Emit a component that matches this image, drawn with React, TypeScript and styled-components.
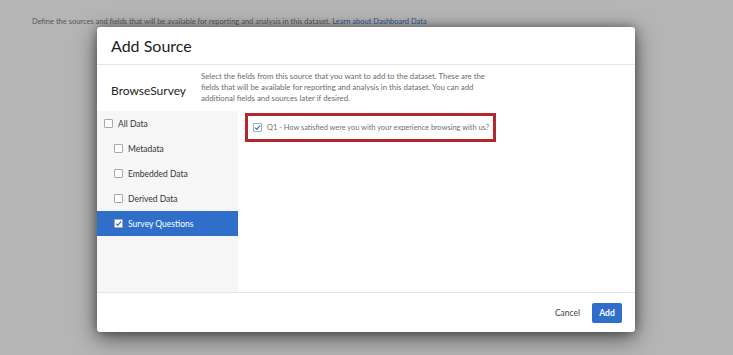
import React from "react";
import styled, { createGlobalStyle } from "styled-components";

const Global = createGlobalStyle`
  html, body { margin: 0; padding: 0; }
  body {
    background: #b5b5b5;
    font-family: Lato, "Open Sans", "Liberation Sans", sans-serif;
    width: 733px;
    height: 355px;
    overflow: hidden;
  }
`;

const Page = styled.div`
  position: relative;
  width: 733px;
  height: 355px;
`;

const Intro = styled.p`
  margin: 0;
  padding: 16px 0 0 32px;
  font-size: 7.5px;
  color: #555;
  line-height: 11px;
`;

const Link = styled.a`
  color: #2a5588;
  text-decoration: none;
`;

const Modal = styled.div`
  position: absolute;
  left: 97px;
  top: 27px;
  width: 538px;
  height: 305px;
  background: #fff;
  border-radius: 3px;
  box-shadow: 0 6px 22px rgba(0, 0, 0, 0.55), 0 0 10px rgba(0, 0, 0, 0.35);
  display: flex;
  flex-direction: column;
  overflow: hidden;
`;

const Header = styled.div`
  height: 38px;
  flex: none;
  display: flex;
  align-items: center;
  padding-left: 14px;
  border-bottom: 1px solid #e6e6e6;
  box-sizing: border-box;
`;

const Title = styled.h2`
  margin: 0;
  font-size: 16px;
  font-weight: 400;
  color: #222;
`;

const SubHeader = styled.div`
  height: 46px;
  flex: none;
  display: flex;
  align-items: center;
`;

const SourceName = styled.div`
  width: 90px;
  padding-left: 14px;
  font-size: 12px;
  color: #222;
  padding-top: 4px;
`;

const Description = styled.p`
  margin: 0;
  width: 285px;
  font-size: 7.8px;
  line-height: 11px;
  color: #6b6b6b;
  padding-bottom: 2px;
`;

const Body = styled.div`
  flex: 1;
  display: flex;
  border-bottom: 1px solid #e6e6e6;
`;

const Sidebar = styled.div`
  width: 141px;
  background: #f6f6f6;
  display: flex;
  flex-direction: column;
`;

const NavRow = styled.div<{ $indent?: boolean; $active?: boolean }>`
  height: 25px;
  display: flex;
  align-items: center;
  gap: 5px;
  padding-left: ${(p) => (p.$indent ? 17 : 7)}px;
  background: ${(p) => (p.$active ? "#2f6fc9" : "transparent")};
  color: ${(p) => (p.$active ? "#fff" : "#333")};
  font-size: 8.5px;
`;

const Box = styled.span<{ $checked?: boolean }>`
  width: 9px;
  height: 9px;
  box-sizing: border-box;
  border: 1px solid #a9a9a9;
  background: #fff;
  border-radius: 1px;
  display: flex;
  align-items: center;
  justify-content: center;
  flex: none;
`;

const Main = styled.div`
  flex: 1;
  padding: 2px 7px;
`;

const Highlight = styled.div`
  width: 251px;
  height: 29px;
  box-sizing: border-box;
  border: 3px solid #b3272d;
  display: flex;
  align-items: center;
  gap: 5px;
  padding-left: 5px;
  font-size: 7.4px;
  color: #707070;
  white-space: nowrap;
`;

const Footer = styled.div`
  height: 39px;
  flex: none;
  display: flex;
  align-items: center;
  justify-content: flex-end;
  gap: 12px;
  padding-right: 13px;
`;

const CancelButton = styled.button`
  background: none;
  border: none;
  font-family: inherit;
  font-size: 8.5px;
  color: #444;
  padding: 0;
`;

const AddButton = styled.button`
  width: 30px;
  height: 20px;
  background: #2f6fc9;
  color: #fff;
  border: none;
  border-radius: 2px;
  font-family: inherit;
  font-size: 8.5px;
  font-weight: 700;
  padding: 0;
`;

const Check = () => (
  <svg width="7" height="7" viewBox="0 0 10 10">
    <path d="M1.5 5.2 L4 7.6 L8.6 2" fill="none" stroke="#2f6fc9" strokeWidth="1.6" />
  </svg>
);

const nav = [
  { label: "Metadata" },
  { label: "Embedded Data" },
  { label: "Derived Data" },
];

export default function App() {
  return (
    <Page>
      <Global />
      <Intro>
        Define the sources and fields that will be available for reporting and analysis in this dataset.{" "}
        <Link>Learn about Dashboard Data</Link>
      </Intro>
      <Modal>
        <Header>
          <Title>Add Source</Title>
        </Header>
        <SubHeader>
          <SourceName>BrowseSurvey</SourceName>
          <Description>
            Select the fields from this source that you want to add to the dataset. These are the fields that will be
            available for reporting and analysis in this dataset. You can add additional fields and sources later if
            desired.
          </Description>
        </SubHeader>
        <Body>
          <Sidebar>
            <NavRow>
              <Box />
              All Data
            </NavRow>
            {nav.map((n) => (
              <NavRow key={n.label} $indent>
                <Box />
                {n.label}
              </NavRow>
            ))}
            <NavRow $indent $active>
              <Box $checked>
                <Check />
              </Box>
              Survey Questions
            </NavRow>
          </Sidebar>
          <Main>
            <Highlight>
              <Box $checked>
                <Check />
              </Box>
              Q1 - How satisfied were you with your experience browsing with us?
            </Highlight>
          </Main>
        </Body>
        <Footer>
          <CancelButton>Cancel</CancelButton>
          <AddButton>Add</AddButton>
        </Footer>
      </Modal>
    </Page>
  );
}
